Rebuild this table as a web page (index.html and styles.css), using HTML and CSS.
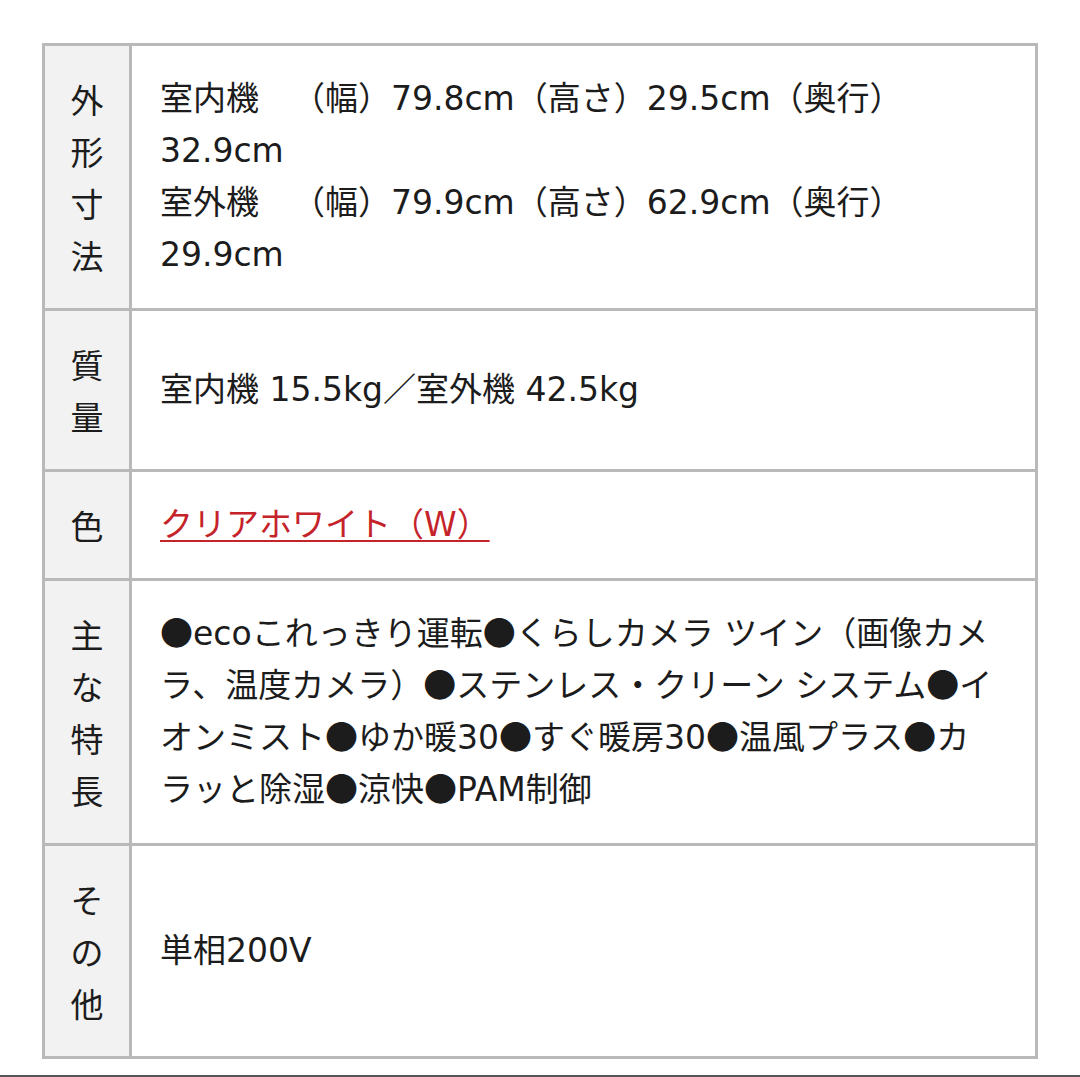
FILE: index.html
```html
<!DOCTYPE html>
<html lang="ja">
<head>
<meta charset="utf-8">
<link rel="stylesheet" href="styles.css">
</head>
<body>
<div class="page">
  <table class="spec">
    <tr>
      <th>外形寸法</th>
      <td>室内機　（幅）79.8cm（高さ）29.5cm（奥行）32.9cm<br>室外機　（幅）79.9cm（高さ）62.9cm（奥行）29.9cm</td>
    </tr>
    <tr>
      <th>質量</th>
      <td>室内機 15.5kg／室外機 42.5kg</td>
    </tr>
    <tr>
      <th>色</th>
      <td><a class="color-link" href="#">クリアホワイト（W）</a></td>
    </tr>
    <tr>
      <th>主な特長</th>
      <td><span class="dot">●</span>ecoこれっきり運転<span class="dot">●</span>くらしカメラ ツイン（画像カメラ、温度カメラ）<span class="dot">●</span>ステンレス・クリーン システム<span class="dot">●</span>イオンミスト<span class="dot">●</span>ゆか暖30<span class="dot">●</span>すぐ暖房30<span class="dot">●</span>温風プラス<span class="dot">●</span>カラッと除湿<span class="dot">●</span>涼快<span class="dot">●</span>PAM制御</td>
    </tr>
    <tr>
      <th>その他</th>
      <td>単相200V</td>
    </tr>
  </table>
  <div class="rule"></div>
</div>
</body>
</html>
```

FILE: styles.css
```css
html, body {
  margin: 0;
  padding: 0;
  background: #ffffff;
}

.page {
  padding: 43px 42px 0 42px;
  width: 1080px;
  box-sizing: border-box;
}

.spec {
  border-collapse: collapse;
  width: 996px;
  font-family: "DejaVu Sans", "Noto Sans CJK JP", sans-serif;
  font-size: 33px;
  line-height: 52px;
  color: #1c1c1c;
  text-spacing-trim: space-all;
}

.spec th,
.spec td {
  border: 3px solid #b9b9b9;
  vertical-align: middle;
}

.spec th {
  background: #f2f2f2;
  width: 40px;
  padding: 27px 22px;
  font-family: "Noto Sans CJK JP", sans-serif;
  font-weight: normal;
  text-align: center;
}

.spec td {
  padding: 27px 33px 27px 28px;
  text-align: left;
}

.dot {
  font-family: "Noto Sans CJK JP", sans-serif;
  line-height: 1;
}

.color-link {
  color: #c5232a;
  text-decoration: underline;
  text-decoration-thickness: 2px;
  text-underline-offset: 4px;
}

.rule {
  margin-top: 16px;
  margin-left: -42px;
  width: 1080px;
  border-top: 2px solid #555555;
}
```
